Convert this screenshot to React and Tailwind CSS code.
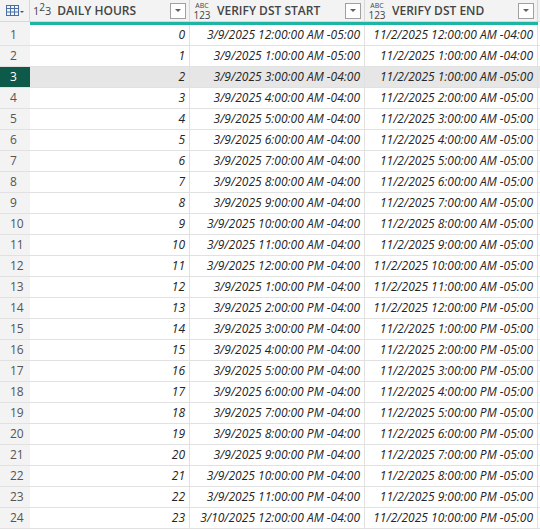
import React from 'react'

function fmt(d, h, off) {
  const ap = h < 12 ? 'AM' : 'PM'
  const hh = h % 12 === 0 ? 12 : h % 12
  return `${d} ${hh}:00:00 ${ap} ${off}`
}

const rows = Array.from({ length: 24 }, (_, h) => {
  let s, e
  if (h < 2) s = fmt('3/9/2025', h, '-05:00')
  else if (h + 1 < 24) s = fmt('3/9/2025', h + 1, '-04:00')
  else s = fmt('3/10/2025', 0, '-04:00')
  if (h < 2) e = fmt('11/2/2025', h, '-04:00')
  else e = fmt('11/2/2025', h - 1, '-05:00')
  return { h, s, e }
})

function Drop() {
  return (
    <div className="flex h-[16px] w-[16px] items-center justify-center border border-[#a0a0a0] bg-white">
      <svg width="8" height="5" viewBox="0 0 8 5"><path d="M1 1h6L4 4z" fill="#606060" /></svg>
    </div>
  )
}

function Abc() {
  return (
    <div className="mr-[6px] flex h-[20px] w-[18px] shrink-0 flex-col items-center justify-center text-[#444]">
      <span className="block h-[8px] text-[7px] leading-[8px]">ABC</span>
      <span className="block h-[10px] text-[10px] leading-[10px]">123</span>
    </div>
  )
}

export default function App() {
  const font = { fontFamily: '"Segoe UI", "Open Sans", "Liberation Sans", sans-serif' }
  return (
    <div className="h-[530px] w-[540px] overflow-hidden bg-white text-[12px] text-[#252423]" style={font}>
      <div className="flex h-[22px] border-b border-[#d8d8d8] bg-[#f3f3f3]">
        <div className="flex w-[30px] items-center justify-center border-r border-[#d8d8d8]">
          <svg width="18" height="12" viewBox="0 0 18 12">
            <rect x="0.5" y="0.5" width="12" height="10" fill="none" stroke="#4a6fa5" />
            <path d="M0.5 3.5h12M0.5 7h12M4.5 0.5v10M8.5 0.5v10" stroke="#4a6fa5" />
            <path d="M14 6h4l-2 2z" fill="#555" />
          </svg>
        </div>
        <div className="flex w-[160px] items-center border-r border-[#d8d8d8] pl-[3px] pr-[3px]">
          <span className="mr-[6px] flex items-end text-[11px] leading-none text-[#444]">
            1<span className="relative -top-[4px] text-[10px]">2</span>3
          </span>
          <span className="flex-1 font-semibold text-[#444]">DAILY HOURS</span>
          <Drop />
        </div>
        <div className="flex w-[175px] items-center border-r border-[#d8d8d8] pl-[3px] pr-[3px]">
          <Abc />
          <span className="flex-1 font-semibold text-[#444]">VERIFY DST START</span>
          <Drop />
        </div>
        <div className="flex w-[173px] items-center border-r border-[#d8d8d8] pl-[3px] pr-[3px]">
          <Abc />
          <span className="flex-1 font-semibold text-[#444]">VERIFY DST END</span>
          <Drop />
        </div>
      </div>
      <div className="flex h-[3px]">
        <div className="w-[30px] bg-[#f3f3f3]" />
        <div className="w-[508px] bg-[#1fb5a5]" />
      </div>
      {rows.map((r) => {
        const sel = r.h === 2
        return (
          <div key={r.h} className={`flex h-[21px] border-b border-[#e1e1e1] ${sel ? 'bg-[#e6e6e6]' : 'bg-white'}`}>
            <div className={`flex w-[30px] items-center pl-[10px] ${sel ? 'bg-[#0e5a4a] text-white' : 'bg-[#f3f3f3] text-[#555]'}`}>
              {r.h + 1}
            </div>
            <div className="flex w-[160px] items-center justify-end border-r border-[#e1e1e1] pr-[4px] italic">{r.h}</div>
            <div className="flex w-[175px] items-center justify-end border-r border-[#e1e1e1] pr-[4px] italic">{r.s}</div>
            <div className="flex w-[173px] items-center justify-end border-r border-[#e1e1e1] pr-[4px] italic">{r.e}</div>
          </div>
        )
      })}
    </div>
  )
}
